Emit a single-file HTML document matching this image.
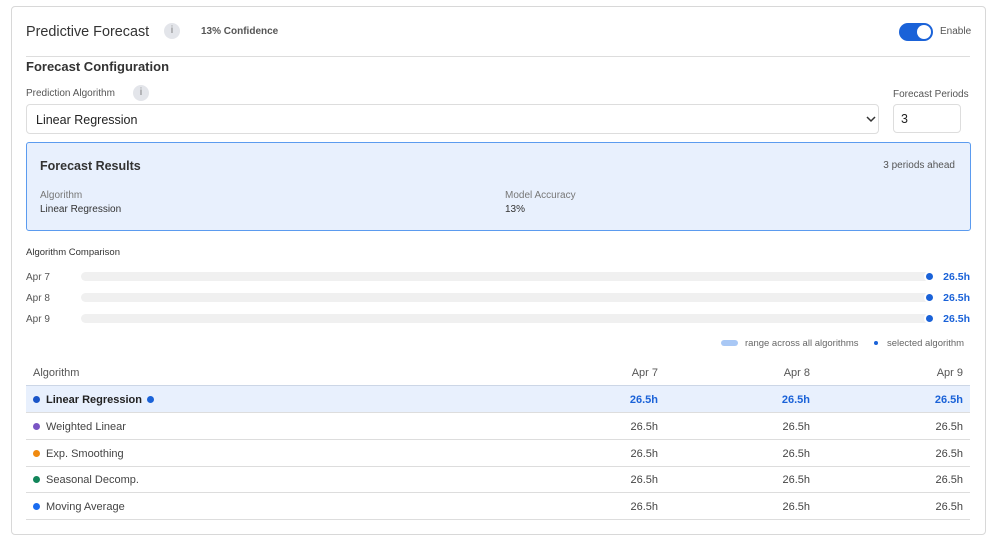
<!DOCTYPE html>
<html><head><style>
*{box-sizing:border-box;margin:0;padding:0}
body{width:999px;height:545px;background:#fff;font-family:"Liberation Sans",sans-serif;color:#222;position:relative;overflow:hidden}
.a{position:absolute;white-space:nowrap}
.card{position:absolute;left:11px;top:6px;width:975px;height:529px;border:1px solid #d8d8d8;border-radius:4px}
.info{position:absolute;width:16px;height:16px;border-radius:50%;background:#e3e5ea;color:#777;font-size:10px;text-align:center;line-height:16px}
.lbl{font-size:10px;color:#555}
.bar{position:absolute;left:81px;width:854px;height:9px;background:#f0f0f0;border-radius:5px}
.dot{position:absolute;width:7px;height:7px;border-radius:50%;background:#1a62d8;box-shadow:0 0 0 2px #fff}
.val{position:absolute;right:29px;font-size:10.5px;font-weight:bold;color:#1a62d8}
.row{position:absolute;left:26px;width:944px;height:27px;border-bottom:1px solid #ddd;font-size:11px;color:#444}
.row span{position:absolute;top:8px}
.c1{right:312px}.c2{right:160px}.c3{right:7px}
.rd{position:absolute;left:7px;top:10px;width:7px;height:7px;border-radius:50%}
</style></head><body>
<div class="card"></div>
<div class="a" style="left:26px;top:24px;font-size:14.4px;color:#333">Predictive Forecast</div>
<div class="info" style="left:164px;top:23px">i</div>
<div class="a" style="left:201px;top:26px;font-size:10px;font-weight:bold;color:#555">13% Confidence</div>
<div class="a" style="left:899px;top:23px;width:34px;height:18px;border-radius:9px;background:#1a62d8"></div>
<div class="a" style="left:917px;top:25px;width:14px;height:14px;border-radius:50%;background:#fff"></div>
<div class="a" style="left:940px;top:26px;font-size:10px;color:#555">Enable</div>
<div class="a" style="left:26px;top:56px;width:944px;height:1px;background:#ddd"></div>
<div class="a" style="left:26px;top:59px;font-size:13px;font-weight:bold;color:#333">Forecast Configuration</div>
<div class="a lbl" style="left:26px;top:88px">Prediction Algorithm</div>
<div class="info" style="left:133px;top:85px">i</div>
<div class="a" style="left:26px;top:104px;width:853px;height:30px;border:1px solid #ddd;border-radius:4px"></div>
<div class="a" style="left:36px;top:113px;font-size:12.5px;color:#222">Linear Regression</div>
<svg class="a" style="left:866px;top:115px" width="10" height="8"><path d="M1 2l4 4 4-4" stroke="#333" stroke-width="1.5" fill="none"/></svg>
<div class="a lbl" style="left:893px;top:89px">Forecast Periods</div>
<div class="a" style="left:893px;top:104px;width:68px;height:29px;border:1px solid #ddd;border-radius:4px"></div>
<div class="a" style="left:901px;top:112px;font-size:12.5px">3</div>
<div class="a" style="left:26px;top:142px;width:945px;height:89px;background:#e8f0fd;border:1px solid #5b9bef;border-radius:3px"></div>
<div class="a" style="left:40px;top:159px;font-size:12.5px;font-weight:bold;color:#333">Forecast Results</div>
<div class="a" style="right:44px;top:160px;font-size:10px;color:#555">3 periods ahead</div>
<div class="a" style="left:40px;top:190px;font-size:10px;color:#777">Algorithm</div>
<div class="a" style="left:40px;top:204px;font-size:10px;color:#333">Linear Regression</div>
<div class="a" style="left:505px;top:190px;font-size:10px;color:#777">Model Accuracy</div>
<div class="a" style="left:505px;top:204px;font-size:10px;color:#333">13%</div>
<div class="a" style="left:26px;top:247px;font-size:9.5px;color:#333">Algorithm Comparison</div>
<div class="a lbl" style="left:26px;top:272px">Apr 7</div><div class="bar" style="top:272px"></div><div class="dot" style="left:926px;top:273px"></div><div class="val" style="top:271px">26.5h</div>
<div class="a lbl" style="left:26px;top:293px">Apr 8</div><div class="bar" style="top:293px"></div><div class="dot" style="left:926px;top:294px"></div><div class="val" style="top:292px">26.5h</div>
<div class="a lbl" style="left:26px;top:314px">Apr 9</div><div class="bar" style="top:314px"></div><div class="dot" style="left:926px;top:315px"></div><div class="val" style="top:313px">26.5h</div>
<div class="a" style="left:721px;top:340px;width:17px;height:6px;border-radius:3px;background:#a9c8f5"></div>
<div class="a" style="left:745px;top:338px;font-size:9.5px;color:#666">range across all algorithms</div>
<div class="dot" style="left:874px;top:341px;width:4px;height:4px"></div>
<div class="a" style="left:887px;top:338px;font-size:9.5px;color:#666">selected algorithm</div>
<div class="row" style="top:359px;border-bottom-color:#ccd6e6;color:#555"><span style="left:7px">Algorithm</span><span class="c1">Apr 7</span><span class="c2">Apr 8</span><span class="c3">Apr 9</span></div>
<div class="row" style="top:386px;background:#e8f0fd;color:#222;font-weight:bold"><div class="rd" style="background:#1a55c8"></div><span style="left:20px">Linear Regression</span><div class="rd" style="left:121px;background:#1a62d8"></div><span class="c1" style="color:#1a62d8">26.5h</span><span class="c2" style="color:#1a62d8">26.5h</span><span class="c3" style="color:#1a62d8">26.5h</span></div>
<div class="row" style="top:413px"><div class="rd" style="background:#7a55c4"></div><span style="left:20px">Weighted Linear</span><span class="c1">26.5h</span><span class="c2">26.5h</span><span class="c3">26.5h</span></div>
<div class="row" style="top:440px"><div class="rd" style="background:#f08a10"></div><span style="left:20px">Exp. Smoothing</span><span class="c1">26.5h</span><span class="c2">26.5h</span><span class="c3">26.5h</span></div>
<div class="row" style="top:466px"><div class="rd" style="background:#12855a"></div><span style="left:20px">Seasonal Decomp.</span><span class="c1">26.5h</span><span class="c2">26.5h</span><span class="c3">26.5h</span></div>
<div class="row" style="top:493px"><div class="rd" style="background:#1a6cf0"></div><span style="left:20px">Moving Average</span><span class="c1">26.5h</span><span class="c2">26.5h</span><span class="c3">26.5h</span></div>
</body></html>
